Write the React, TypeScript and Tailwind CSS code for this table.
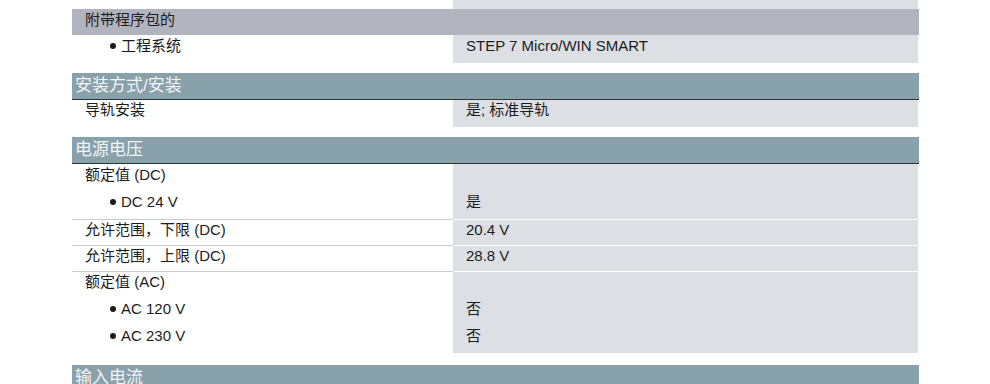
import React from "react";

const FONT = {
  fontFamily: '"Liberation Sans", Arial, "Noto Sans CJK SC", sans-serif',
};

function Header({ text, light }: { text: string; light?: boolean }) {
  if (light) {
    return (
      <div className="h-[26px] w-[847px] bg-[#b1b4be] pl-[13px] text-[15px] leading-[22px] text-[#1c1c1c]">
        {text}
      </div>
    );
  }
  return (
    <div className="h-[27px] w-[847px] border-b border-[#2f3436] bg-[#89a1ab] pl-[3px] text-[17px] leading-[26px] text-[#f2f5f6]">
      {text}
    </div>
  );
}

function Bullet({ children }: { children: React.ReactNode }) {
  return (
    <span className="flex items-center pl-[38px]">
      <span className="mr-[5px] inline-block h-[6px] w-[6px] rounded-full bg-[#1c1c1c]" />
      {children}
    </span>
  );
}

type Line = { label: string; bullet?: boolean; value?: string; h: string };

function Row({ lines, last }: { lines: Line[]; last?: boolean }) {
  return (
    <div className="flex w-[847px]">
      <div className={"w-[381px] " + (last ? "" : "border-b border-[#c9ccd0]")}>
        {lines.map((l, i) => (
          <div key={i} className={l.h + " text-[15px] leading-[20px] text-[#1c1c1c]"}>
            {l.bullet ? <Bullet>{l.label}</Bullet> : <span className="pl-[13px]">{l.label}</span>}
          </div>
        ))}
      </div>
      <div className={"w-[465px] bg-[#dcdfe3] " + (last ? "" : "border-b border-white")}>
        {lines.map((l, i) => (
          <div key={i} className={l.h + " pl-[13px] text-[15px] leading-[20px] text-[#1c1c1c]"}>
            {l.value ?? ""}
          </div>
        ))}
      </div>
    </div>
  );
}

export default function App() {
  return (
    <div className="h-[384px] w-[990px] overflow-hidden bg-white" style={FONT}>
      <div className="pl-[72px]">
        <div className="flex w-[847px]">
          <div className="h-[9px] w-[381px]" />
          <div className="h-[9px] w-[465px] bg-[#dcdfe3]" />
        </div>
        <Header text="附带程序包的" light />
        <div className="flex w-[847px]">
          <div className="h-[28px] w-[381px] pt-[1px] text-[15px] leading-[20px] text-[#1c1c1c]">
            <Bullet>工程系统</Bullet>
          </div>
          <div className="h-[28px] w-[465px] bg-[#dcdfe3] pl-[13px] pt-[1px] text-[15px] leading-[20px] text-[#1c1c1c]">
            STEP 7 Micro/WIN SMART
          </div>
        </div>
        <div className="h-[10px]" />
        <Header text="安装方式/安装" />
        <Row lines={[{ label: "导轨安装", value: "是; 标准导轨", h: "h-[27px]" }]} last />
        <div className="h-[10px]" />
        <Header text="电源电压" />
        <Row
          lines={[
            { label: "额定值 (DC)", h: "h-[28px] pt-[1px]" },
            { label: "DC 24 V", bullet: true, value: "是", h: "h-[27px]" },
          ]}
        />
        <Row lines={[{ label: "允许范围，下限 (DC)", value: "20.4 V", h: "h-[25px]" }]} />
        <Row lines={[{ label: "允许范围，上限 (DC)", value: "28.8 V", h: "h-[25px]" }]} />
        <Row
          lines={[
            { label: "额定值 (AC)", h: "h-[27px]" },
            { label: "AC 120 V", bullet: true, value: "否", h: "h-[27px]" },
            { label: "AC 230 V", bullet: true, value: "否", h: "h-[27px]" },
          ]}
          last
        />
        <div className="h-[12px]" />
        <Header text="输入电流" />
      </div>
    </div>
  );
}
